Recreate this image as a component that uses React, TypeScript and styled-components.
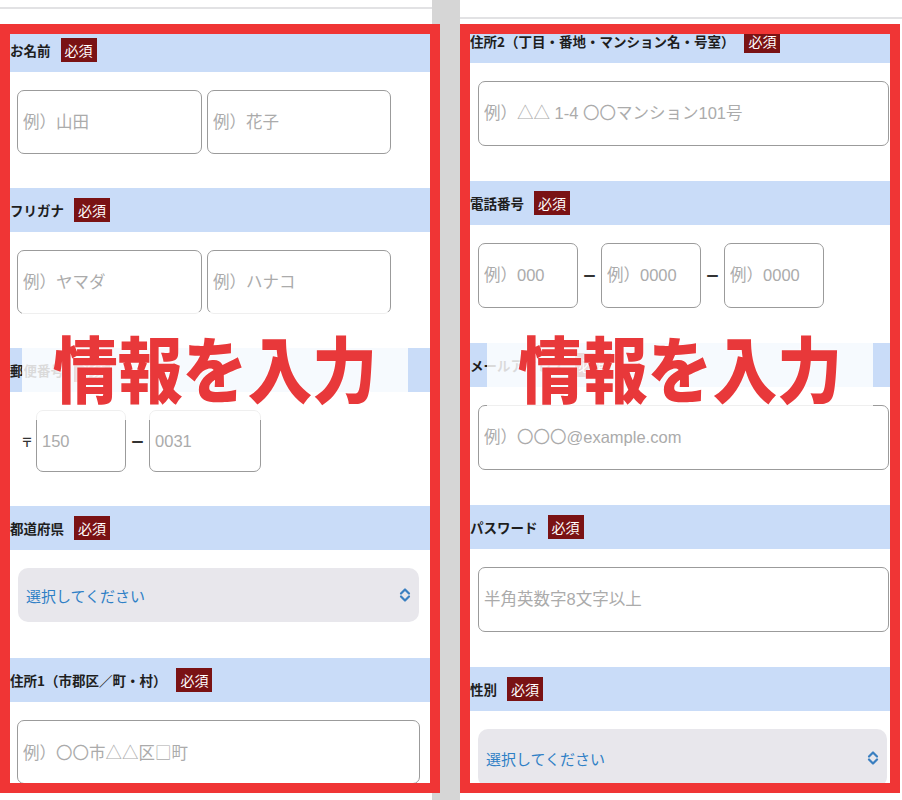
import React from "react";
import styled, { createGlobalStyle } from "styled-components";

const Global = createGlobalStyle`
  html, body { margin: 0; padding: 0; background: #fff; }
  body { font-family: "Noto Sans CJK JP", "Noto Sans", sans-serif; }
  * { box-sizing: border-box; }
`;

const Page = styled.div`
  display: flex;
  width: 902px;
  height: 800px;
  overflow: hidden;
  background: #d6d6d6;
`;

const Column = styled.div<{ $side: "left" | "right" }>`
  display: flex;
  flex-direction: column;
  flex: none;
  width: ${(p) => (p.$side === "left" ? "440px" : "442px")};
  margin-left: ${(p) => (p.$side === "left" ? "0" : "20px")};
  background: ${(p) =>
    p.$side === "left"
      ? "linear-gradient(to right, #fff 432px, #d6d6d6 432px)"
      : "#fff"};
`;

const TopStrip = styled.div<{ $line: number; $trim: number }>`
  flex: none;
  height: 24px;
  margin-right: ${(p) => p.$trim}px;
  background: linear-gradient(
    to bottom,
    #fff ${(p) => p.$line}px,
    #e2e2e4 ${(p) => p.$line}px,
    #e2e2e4 ${(p) => p.$line + 2}px,
    #fff ${(p) => p.$line + 2}px
  );
`;

const Frame = styled.div`
  position: relative;
  flex: none;
  width: 440px;
  height: 769px;
  border: 10px solid #f03535;
  background: #fff;
  overflow: hidden;
`;

const Content = styled.div<{ $shift: number }>`
  display: flex;
  flex-direction: column;
  margin-top: ${(p) => -p.$shift}px;
`;

const Header = styled.div`
  display: flex;
  align-items: center;
  gap: 10px;
  height: 44px;
  flex: none;
  background: #c9dcf8;
`;

const Label = styled.span`
  font-size: 13.5px;
  font-weight: 700;
  color: #1e1e1e;
  white-space: nowrap;
`;

const Badge = styled.span`
  height: 24px;
  line-height: 24px;
  padding: 0 4px;
  background: #7a1214;
  color: #fff;
  font-size: 14px;
  white-space: nowrap;
`;

const Body = styled.div<{ $pad: string }>`
  display: flex;
  align-items: center;
  gap: 5px;
  padding: ${(p) => p.$pad};
`;

const Field = styled.input<{ $w?: number; $h: number; $cjk?: boolean }>`
  flex: none;
  width: ${(p) => (p.$w ? `${p.$w}px` : "100%")};
  height: ${(p) => p.$h}px;
  padding: 0 0 0 5px;
  border: 1px solid #9b9b9b;
  border-radius: 7px;
  background: #fff;
  font-family: ${(p) =>
    p.$cjk
      ? `"Noto Sans CJK JP", sans-serif`
      : `"Liberation Sans", "Noto Sans CJK JP", sans-serif`};
  font-size: 16.5px;
  color: #333;
  outline: none;
  &::placeholder {
    color: #ababab;
  }
`;

const SelectBox = styled.div<{ $h: number }>`
  display: flex;
  align-items: center;
  justify-content: space-between;
  width: 100%;
  height: ${(p) => p.$h}px;
  padding: 0 7px 0 8px;
  border-radius: 10px;
  background: #e8e7ec;
  color: #2f80c6;
  font-size: 15px;
`;

const PostMark = styled.span`
  margin: 0 -2px 0 4px;
  font-size: 12px;
  font-weight: 700;
  color: #333;
`;

const Dash = styled.span`
  font-size: 13px;
  font-weight: 700;
  line-height: 1;
  color: #333;
`;

const Overlay = styled.div<{ $left: number }>`
  position: absolute;
  top: 278px;
  left: ${(p) => p.$left}px;
  width: 386px;
  height: 108px;
  display: flex;
  align-items: center;
  justify-content: center;
  background: rgba(255, 255, 255, 0.84);
`;

const BigText = styled.span`
  font-size: 72px;
  font-weight: 900;
  line-height: 1;
  color: #e8383a;
  white-space: nowrap;
  transform: scaleX(0.9);
  text-shadow: 0 0 3px #fff;
`;

const UpDown = () => (
  <svg width="14" height="18" viewBox="0 0 14 18" fill="none" stroke="#3a7fc0" strokeWidth="2.2" strokeLinecap="round" strokeLinejoin="round">
    <path d="M3 7.5 L7 3.5 L11 7.5" />
    <path d="M3 10.5 L7 14.5 L11 10.5" />
  </svg>
);

type SectionProps = { label: string; pad: string; children: React.ReactNode };

const Section = ({ label, pad, children }: SectionProps) => (
  <div>
    <Header>
      <Label>{label}</Label>
      <Badge>必須</Badge>
    </Header>
    <Body $pad={pad}>{children}</Body>
  </div>
);

const L = "18px 10px 34px 7px";
const LS = "18px 11px 36px 8px";
const R = "18px 1px 35px 8px";
const RS = "18px 3px 35px 8px";

export default function App() {
  return (
    <>
      <Global />
      <Page>
        <Column $side="left">
          <TopStrip $line={7} $trim={8} />
          <Frame>
            <Content $shift={6}>
              <Section label="お名前" pad={L}>
                <Field $w={185} $h={64} placeholder="例）山田" />
                <Field $w={184} $h={64} placeholder="例）花子" />
              </Section>
              <Section label="フリガナ" pad={L}>
                <Field $w={185} $h={64} placeholder="例）ヤマダ" />
                <Field $w={184} $h={64} placeholder="例）ハナコ" />
              </Section>
              <Section label="郵便番号" pad={L}>
                <PostMark>〒</PostMark>
                <Field $w={90} $h={62} placeholder="150" />
                <Dash>ー</Dash>
                <Field $w={112} $h={62} placeholder="0031" />
              </Section>
              <Section label="都道府県" pad={LS}>
                <SelectBox $h={54}>
                  <span>選択してください</span>
                  <UpDown />
                </SelectBox>
              </Section>
              <Section label="住所1（市郡区／町・村）" pad={L}>
                <Field $h={64} $cjk placeholder="例）〇〇市△△区□町" />
              </Section>
            </Content>
            <Overlay $left={12}>
              <BigText>情報を入力</BigText>
            </Overlay>
          </Frame>
        </Column>
        <Column $side="right">
          <TopStrip $line={17} $trim={0} />
          <Frame>
            <Content $shift={15}>
              <Section label="住所2（丁目・番地・マンション名・号室）" pad={R}>
                <Field $h={65} placeholder="例）△△ 1-4 〇〇マンション101号" />
              </Section>
              <Section label="電話番号" pad={R}>
                <Field $w={100} $h={65} placeholder="例）000" />
                <Dash>ー</Dash>
                <Field $w={100} $h={65} placeholder="例）0000" />
                <Dash>ー</Dash>
                <Field $w={100} $h={65} placeholder="例）0000" />
              </Section>
              <Section label="メールアドレス" pad={R}>
                <Field $h={65} placeholder="例）〇〇〇@example.com" />
              </Section>
              <Section label="パスワード" pad={R}>
                <Field $h={65} placeholder="半角英数字8文字以上" />
              </Section>
              <Section label="性別" pad={RS}>
                <SelectBox $h={58}>
                  <span>選択してください</span>
                  <UpDown />
                </SelectBox>
              </Section>
            </Content>
            <Overlay $left={17}>
              <BigText>情報を入力</BigText>
            </Overlay>
          </Frame>
        </Column>
      </Page>
    </>
  );
}
